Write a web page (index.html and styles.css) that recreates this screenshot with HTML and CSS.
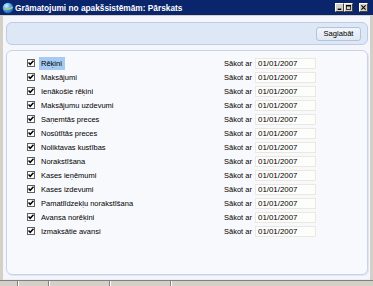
FILE: index.html
```html
<!DOCTYPE html>
<html>
<head>
<meta charset="utf-8">
<link rel="stylesheet" href="styles.css">
</head>
<body>
<div class="window">
  <div class="titlebar">
    <svg class="appicon" width="12" height="12" viewBox="0 0 12 12">
      <defs>
        <radialGradient id="g" cx="0.35" cy="0.3" r="0.8">
          <stop offset="0" stop-color="#d9f0ff"/>
          <stop offset="0.5" stop-color="#4aa0e6"/>
          <stop offset="1" stop-color="#1a4f9c"/>
        </radialGradient>
      </defs>
      <circle cx="6" cy="6" r="5.3" fill="url(#g)"/>
      <path d="M2 7.5 C4 5.5 7 9 10.5 5" stroke="#9ed37a" stroke-width="1.4" fill="none"/>
    </svg>
    <span class="title">Grāmatojumi no apakšsistēmām: Pārskats</span>
    <div class="winbtns">
      <div class="wb"><svg width="7" height="7" viewBox="0 0 7 7"><rect x="1" y="5" width="5" height="2" fill="#000"/></svg></div>
      <div class="wb"><svg width="7" height="7" viewBox="0 0 7 7"><rect x="0.5" y="0.5" width="6" height="6" fill="none" stroke="#000"/><rect x="0" y="0" width="7" height="2" fill="#000"/></svg></div>
      <div class="wb close"><svg width="7" height="7" viewBox="0 0 7 7"><path d="M0.5 0.5 L6.5 6.5 M6.5 0.5 L0.5 6.5" stroke="#000" stroke-width="1.5"/></svg></div>
    </div>
  </div>
  <div class="client">
    <div class="toolbar">
      <button class="save">Saglabāt</button>
    </div>
    <div class="panel">
      <div class="row"><span class="cb"></span><span class="label"><span class="sel">Rēķini</span></span><span class="since">Sākot ar</span><span class="date">01/01/2007</span></div>
      <div class="row"><span class="cb"></span><span class="label"><span class="txt">Maksājumi</span></span><span class="since">Sākot ar</span><span class="date">01/01/2007</span></div>
      <div class="row"><span class="cb"></span><span class="label"><span class="txt">Ienākošie rēķini</span></span><span class="since">Sākot ar</span><span class="date">01/01/2007</span></div>
      <div class="row"><span class="cb"></span><span class="label"><span class="txt">Maksājumu uzdevumi</span></span><span class="since">Sākot ar</span><span class="date">01/01/2007</span></div>
      <div class="row"><span class="cb"></span><span class="label"><span class="txt">Saņemtās preces</span></span><span class="since">Sākot ar</span><span class="date">01/01/2007</span></div>
      <div class="row"><span class="cb"></span><span class="label"><span class="txt">Nosūtītās preces</span></span><span class="since">Sākot ar</span><span class="date">01/01/2007</span></div>
      <div class="row"><span class="cb"></span><span class="label"><span class="txt">Noliktavas kustības</span></span><span class="since">Sākot ar</span><span class="date">01/01/2007</span></div>
      <div class="row"><span class="cb"></span><span class="label"><span class="txt">Norakstīšana</span></span><span class="since">Sākot ar</span><span class="date">01/01/2007</span></div>
      <div class="row"><span class="cb"></span><span class="label"><span class="txt">Kases ieņēmumi</span></span><span class="since">Sākot ar</span><span class="date">01/01/2007</span></div>
      <div class="row"><span class="cb"></span><span class="label"><span class="txt">Kases izdevumi</span></span><span class="since">Sākot ar</span><span class="date">01/01/2007</span></div>
      <div class="row"><span class="cb"></span><span class="label"><span class="txt">Pamatlīdzekļu norakstīšana</span></span><span class="since">Sākot ar</span><span class="date">01/01/2007</span></div>
      <div class="row"><span class="cb"></span><span class="label"><span class="txt">Avansa norēķini</span></span><span class="since">Sākot ar</span><span class="date">01/01/2007</span></div>
      <div class="row"><span class="cb"></span><span class="label"><span class="txt">Izmaksātie avansi</span></span><span class="since">Sākot ar</span><span class="date">01/01/2007</span></div>
    </div>
  </div>
  <div class="statusbar">
    <span class="seg s1"></span><span class="seg s2"></span><span class="seg s3"></span><span class="seg s4"></span>
  </div>
</div>
</body>
</html>
```
FILE: styles.css
```css
html, body {
  margin: 0;
  padding: 0;
  background: #d4d0c8;
}
.window {
  width: 373px;
  height: 286px;
  display: flex;
  flex-direction: column;
  background: #d4d0c8;
  font-family: "Liberation Sans", Arial, sans-serif;
  overflow: hidden;
}
.titlebar {
  height: 15px;
  flex: none;
  background: #0a256b;
  display: flex;
  align-items: center;
  padding-left: 2px;
  padding-right: 5px;
}
.appicon {
  flex: none;
  margin-right: 1px;
}
.title {
  color: #fff;
  font-weight: bold;
  font-size: 8.3px;
  white-space: nowrap;
  flex: 1;
}
.winbtns {
  display: flex;
  align-items: center;
}
.wb {
  width: 9px;
  height: 9px;
  box-sizing: border-box;
  background: #d4d0c8;
  border-top: 1px solid #fff;
  border-left: 1px solid #fff;
  border-right: 1px solid #404040;
  border-bottom: 1px solid #404040;
  display: flex;
  align-items: center;
  justify-content: center;
}
.wb svg { width: 5px; height: 5px; }
.wb.close { margin-left: 6px; }
.client {
  flex: 1;
  margin: 1px 3px 0 3px;
  background: #f4f6fb;
  display: flex;
  flex-direction: column;
  padding: 6px 2px 4px 3px;
  gap: 5px;
  border-bottom: 1px solid #e9edf5;
}
.toolbar {
  height: 23px;
  box-sizing: border-box;
  border: 1px solid #bccde6;
  border-radius: 6px;
  background: #dde7f5;
  display: flex;
  align-items: center;
  justify-content: flex-end;
  padding-right: 5px;
}
.save {
  font-family: "Liberation Sans", Arial, sans-serif;
  font-size: 7.6px;
  height: 14px;
  width: 45px;
  padding: 0;
  margin-right: 1px;
  border: 1px solid #b3c3da;
  border-radius: 3px;
  background: linear-gradient(#f1f5fb, #e0e8f3);
  color: #000;
}
.panel {
  flex: 1;
  box-sizing: border-box;
  border: 1px solid #c7d4e8;
  border-radius: 6px;
  background: #f8f9fd;
  padding: 5px 0 0 20px;
  box-shadow: 1px 1px 0 #dfe6f1;
}
.row {
  display: flex;
  align-items: center;
  height: 14px;
  font-size: 7.5px;
  color: #000;
}
.cb {
  width: 8px;
  height: 8px;
  box-sizing: border-box;
  border: 1px solid #5f5f5f;
  background: #fff url("data:image/svg+xml;utf8,<svg xmlns='http://www.w3.org/2000/svg' width='6' height='6' viewBox='0 0 6 6'><path d='M0.5 2.5 L2.2 4.3 L5.5 0.8' stroke='black' stroke-width='1.5' fill='none'/></svg>") center / 6px 6px no-repeat;
  margin-right: 4px;
  flex: none;
}
.label {
  width: 185px;
  flex: none;
  white-space: nowrap;
}
.sel {
  background: #a6cbf3;
  padding: 2px 3px 2px 2px;
}
.txt {
  padding-left: 2px;
}
.since {
  width: 31px;
  flex: none;
  white-space: nowrap;
}
.date {
  width: 61px;
  height: 11px;
  box-sizing: border-box;
  border: 1px solid #ebe8df;
  background: #fdfdfb;
  padding-left: 2px;
  font-size: 7.9px;
  line-height: 9px;
  flex: none;
}
.statusbar {
  height: 5px;
  flex: none;
  border-top: 1px solid #808080;
  background: #d4d0c8;
  display: flex;
}
.seg {
  height: 5px;
  border-right: 1px solid #808080;
  box-shadow: 1px 0 0 #fff;
}
.s1 { width: 17px; }
.s2 { width: 30px; }
.s3 { width: 60px; }
.s4 { width: 60px; }
```
